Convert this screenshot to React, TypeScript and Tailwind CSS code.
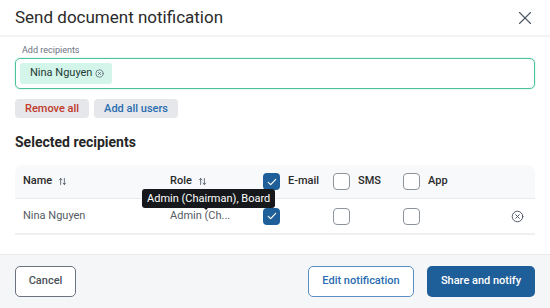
import { X } from 'lucide-react';

function Check({ checked }: { checked?: boolean }) {
  if (checked) {
    return (
      <span className="flex h-[17px] w-[17px] items-center justify-center rounded-[4px] bg-[#1f5f99]">
        <svg viewBox="0 0 16 16" className="h-[12px] w-[12px]" fill="none" stroke="white" strokeWidth="1.6" strokeLinecap="round" strokeLinejoin="round">
          <path d="M3 8.5l3.2 3L13 4.5" />
        </svg>
      </span>
    );
  }
  return <span className="block h-[17px] w-[17px] rounded-[4px] border border-[#8d939b] bg-white" />;
}

function SortIcon() {
  return (
    <svg viewBox="0 0 12 12" className="ml-[6px] h-[9px] w-[9px]" fill="none" stroke="#4b5563" strokeWidth="1.1" strokeLinecap="round">
      <path d="M3.5 10V2M1.8 3.8L3.5 2l1.7 1.8M8.5 2v8M6.8 8.2L8.5 10l1.7-1.8" />
    </svg>
  );
}

function CircleX({ className }: { className?: string }) {
  return (
    <svg viewBox="0 0 16 16" className={className} fill="none" stroke="currentColor" strokeWidth="1.2" strokeLinecap="round">
      <circle cx="8" cy="8" r="6.5" />
      <path d="M5.8 5.8l4.4 4.4M10.2 5.8l-4.4 4.4" />
    </svg>
  );
}

export default function App() {
  return (
    <div className="flex h-[308px] w-[550px] flex-col bg-white font-['Roboto',sans-serif] text-[#222]">
      <div className="flex h-[37px] items-center justify-between border-b-2 border-[#f2f3f4] pl-[15px] pr-[14px]">
        <h1 className="text-[17px] leading-none text-[#2a2a2a]">Send document notification</h1>
        <X className="h-[22px] w-[22px] text-[#4b5563]" strokeWidth={1.2} />
      </div>

      <div className="flex-1 px-[15px]">
        <div className="pl-[7px] pt-[8px] text-[9px] leading-[11px] text-[#6b7280]">Add recipients</div>
        <div className="mt-[2px] flex h-[31px] items-center rounded-[5px] border-[1.5px] border-[#4cc39a] px-[4px] shadow-[0_0_2px_#a7e8d2]">
          <span className="flex h-[21px] items-center gap-[3px] rounded-[3px] bg-[#d4f5ea] pl-[10px] pr-[8px] text-[11px] text-[#1f3b35]">
            Nina Nguyen
            <CircleX className="h-[9px] w-[9px] text-[#4b5563]" />
          </span>
        </div>

        <div className="mt-[10px] flex gap-[5px]">
          <button className="h-[19px] rounded-[4px] bg-[#e5e7ea] px-[10px] text-[11px] font-medium leading-none text-[#c0392b]">Remove all</button>
          <button className="h-[19px] rounded-[4px] bg-[#e5e7ea] px-[10px] text-[11px] font-medium leading-none text-[#2a6db0]">Add all users</button>
        </div>

        <h2 className="mt-[17px] text-[14px] font-bold leading-none text-[#262626]">Selected recipients</h2>

        <div className="relative mt-[16px]">
          <div className="flex h-[34px] items-center rounded-t-[8px] border-b border-[#e8eaed] bg-[#f8f9fa] text-[11px] font-medium text-[#2a2a2a]">
            <div className="flex w-[155px] items-center pl-[8px]">Name<SortIcon /></div>
            <div className="flex w-[93px] items-center">Role<SortIcon /></div>
            <div className="flex w-[70px] items-center gap-[8px]"><Check checked />E-mail</div>
            <div className="flex w-[70px] items-center gap-[8px]"><Check />SMS</div>
            <div className="flex items-center gap-[8px]"><Check />App</div>
          </div>
          <div className="flex h-[36px] items-center border-b-2 border-[#eef0f2] text-[11px] text-[#555b63]">
            <div className="w-[155px] pl-[8px]">Nina Nguyen</div>
            <div className="w-[93px]">Admin (Ch...</div>
            <div className="w-[70px]"><Check checked /></div>
            <div className="w-[70px]"><Check /></div>
            <div className="flex-1"><Check /></div>
            <CircleX className="mr-[11px] h-[13px] w-[13px] text-[#4b5563]" />
          </div>

          <div className="absolute left-[127px] top-[24px] flex h-[19px] items-center rounded-[3px] bg-[#16181b] px-[5px] text-[11px] leading-none text-white">
            Admin (Chairman), Board
            <span className="absolute left-[61px] top-[18px] h-0 w-0 border-x-[3px] border-t-[3px] border-x-transparent border-t-[#16181b]" />
          </div>
        </div>
      </div>

      <div className="flex h-[54px] items-center justify-between border-t border-[#e8eaed] bg-[#f5f6f8] px-[15px]">
        <button className="h-[31px] w-[61px] rounded-[5px] border border-[#6b7280] bg-white text-[11px] font-medium text-[#4b5158]">Cancel</button>
        <div className="flex gap-[13px]">
          <button className="h-[31px] w-[106px] rounded-[5px] border border-[#5b8fc4] bg-white text-[11px] font-medium text-[#2a6db0]">Edit notification</button>
          <button className="h-[31px] w-[108px] rounded-[5px] bg-[#1f5f99] text-[11px] font-medium text-white">Share and notify</button>
        </div>
      </div>
    </div>
  );
}
